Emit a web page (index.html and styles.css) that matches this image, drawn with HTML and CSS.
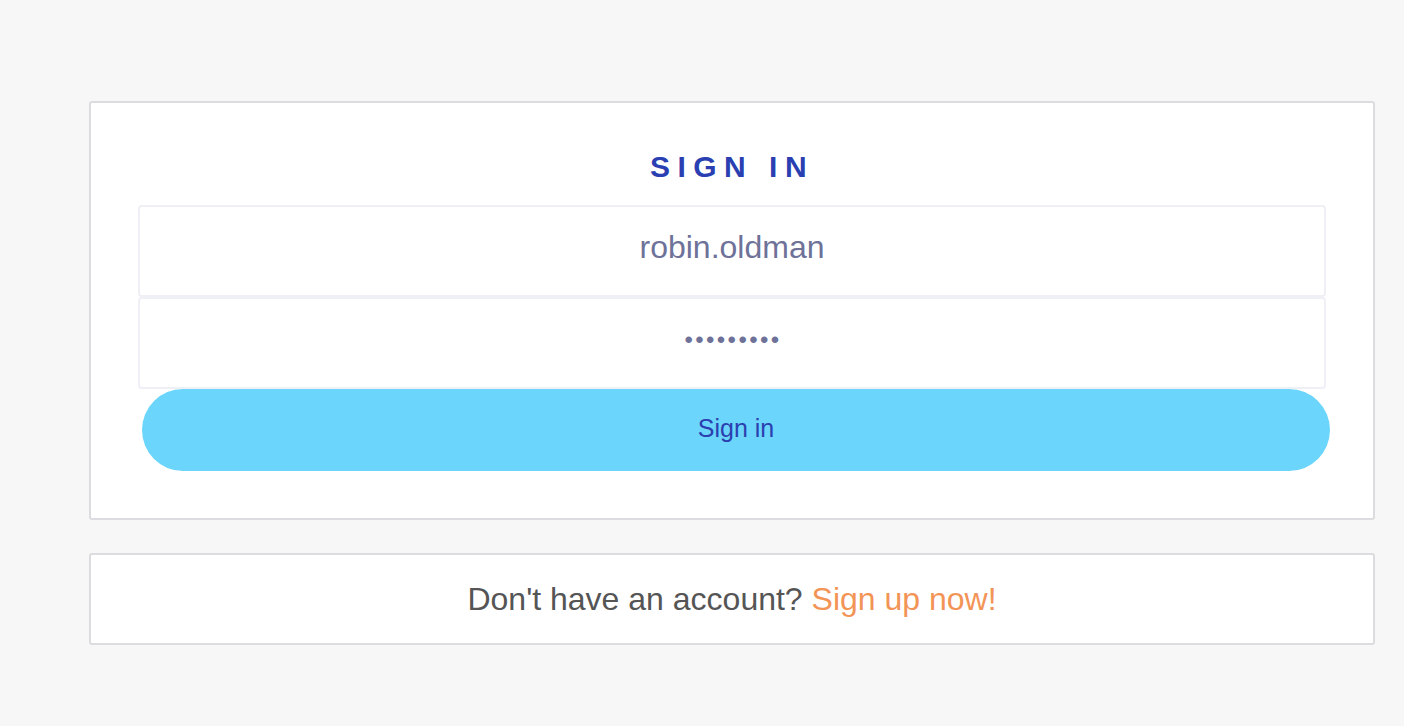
FILE: index.html
```html
<!DOCTYPE html>
<html lang="en">
<head>
<meta charset="utf-8">
<title>Sign in</title>
<link rel="stylesheet" href="styles.css">
</head>
<body>
<main class="page">
  <section class="card login">
    <h1 class="title">SIGN IN</h1>
    <form class="form">
      <input class="field" type="text" value="robin.oldman" aria-label="Username">
      <input class="field field-password" type="password" value="password1" aria-label="Password">
      <button class="submit" type="button">Sign in</button>
    </form>
  </section>
  <section class="card signup">
    <p class="signup-text">Don't have an account? <a class="signup-link" href="#">Sign up now!</a></p>
  </section>
</main>
</body>
</html>
```

FILE: styles.css
```css
* {
  box-sizing: border-box;
}

html, body {
  margin: 0;
  padding: 0;
  background: #f7f7f7;
  font-family: "Liberation Sans", Arial, Helvetica, sans-serif;
}

.page {
  width: 1286px;
  margin-left: 89px;
  padding-top: 101px;
}

.card {
  background: #ffffff;
  border: 2px solid #dcdce0;
  border-radius: 3px;
}

.login {
  padding: 47px;
}

.title {
  margin: 0 0 21px;
  font-size: 30px;
  line-height: 34px;
  font-weight: 700;
  letter-spacing: 7.5px;
  text-align: center;
  color: #2a3fb1;
}

.form {
  display: flex;
  flex-direction: column;
  margin: 0;
}

.field {
  display: block;
  width: 100%;
  height: 92px;
  margin: 0;
  padding: 0 0 7px;
  border: 2px solid #efeff6;
  border-radius: 4px;
  background: #ffffff;
  font-family: inherit;
  font-size: 32px;
  color: #6e7299;
  text-align: center;
  outline: none;
}

.field-password {
  font-size: 24px;
  letter-spacing: 2.4px;
  padding: 0 0 6px 2px;
}

.submit {
  display: block;
  width: 100%;
  height: 82px;
  margin: 0 0 0 4px;
  padding: 0 0 4px;
  border: none;
  border-radius: 41px;
  background: #6bd5fb;
  font-family: inherit;
  font-size: 25px;
  color: #2b3fb0;
  cursor: pointer;
}

.signup {
  margin-top: 33px;
  height: 92px;
  display: flex;
  align-items: center;
  justify-content: center;
}

.signup-text {
  margin: 0;
  font-size: 32px;
  color: #555555;
}

.signup-link {
  color: #f39457;
  text-decoration: none;
}
```
